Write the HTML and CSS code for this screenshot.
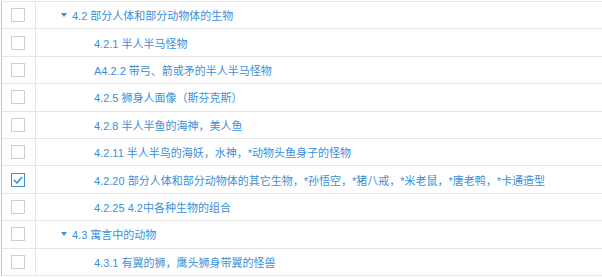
FILE: index.html
```html
<!DOCTYPE html>
<html lang="zh">
  <head>
    <meta charset="UTF-8" />
    <title>分类树</title>
    <link rel="stylesheet" href="styles.css">
  </head>
  <body>
    <div class="tree">
      <div class="row">
        <div class="check"><span class="box"></span></div>
        <div class="name lv1"><span class="caret"></span><a href="#">4.2 部分人体和部分动物体的生物</a></div>
      </div>
      <div class="row">
        <div class="check"><span class="box"></span></div>
        <div class="name lv2"><a href="#">4.2.1 半人半马怪物</a></div>
      </div>
      <div class="row">
        <div class="check"><span class="box"></span></div>
        <div class="name lv2"><a href="#">A4.2.2 带弓、箭或矛的半人半马怪物</a></div>
      </div>
      <div class="row">
        <div class="check"><span class="box"></span></div>
        <div class="name lv2"><a href="#">4.2.5 狮身人面像（斯芬克斯）</a></div>
      </div>
      <div class="row">
        <div class="check"><span class="box"></span></div>
        <div class="name lv2"><a href="#">4.2.8 半人半鱼的海神，美人鱼</a></div>
      </div>
      <div class="row">
        <div class="check"><span class="box"></span></div>
        <div class="name lv2"><a href="#">4.2.11 半人半鸟的海妖，水神，*动物头鱼身子的怪物</a></div>
      </div>
      <div class="row">
        <div class="check">
          <span class="box checked">
            <svg width="10" height="8" viewBox="0 0 10 8"><path d="M1 4 L4 7 L9 1" fill="none" stroke="#3b8fd9" stroke-width="1.6"/></svg>
          </span>
        </div>
        <div class="name lv2"><a href="#">4.2.20 部分人体和部分动物体的其它生物，*孙悟空，*猪八戒，*米老鼠，*唐老鸭，*卡通造型</a></div>
      </div>
      <div class="row">
        <div class="check"><span class="box"></span></div>
        <div class="name lv2"><a href="#">4.2.25 4.2中各种生物的组合</a></div>
      </div>
      <div class="row">
        <div class="check"><span class="box"></span></div>
        <div class="name lv1"><span class="caret"></span><a href="#">4.3 寓言中的动物</a></div>
      </div>
      <div class="row">
        <div class="check"><span class="box"></span></div>
        <div class="name lv2"><a href="#">4.3.1 有翼的狮，鹰头狮身带翼的怪兽</a></div>
      </div>
    </div>
  </body>
</html>
```

FILE: styles.css
```css
* {
  margin: 0;
  padding: 0;
  box-sizing: border-box;
}

body {
  background: #fff;
  padding: 1px 0 0 1px;
  font-family: "Liberation Sans", "Noto Sans CJK SC", sans-serif;
  font-size: 11px;
}

.tree {
  border-top: 1px solid #e6e6e6;
  border-left: 1px solid #c4c4c4;
}

.row {
  display: flex;
  height: 27.4px;
  border-bottom: 1px solid #e6e6e6;
}

.check {
  width: 34px;
  border-right: 1px solid #e6e6e6;
  display: flex;
  align-items: center;
  padding-left: 9px;
}

.box {
  width: 14px;
  height: 14px;
  border: 1px solid #cfcfcf;
  background: #fff;
  display: flex;
  align-items: center;
  justify-content: center;
}

.box.checked {
  border-color: #3b8fd9;
}

.name {
  flex: 1;
  display: flex;
  align-items: center;
}

.name a {
  color: #3b8fd9;
  text-decoration: none;
  white-space: nowrap;
}

.lv1 {
  padding-left: 25px;
}

.lv2 {
  padding-left: 58px;
}

.caret {
  width: 0;
  height: 0;
  border-left: 3.5px solid transparent;
  border-right: 3.5px solid transparent;
  border-top: 4px solid #3b8fd9;
  margin-right: 5px;
}
```
